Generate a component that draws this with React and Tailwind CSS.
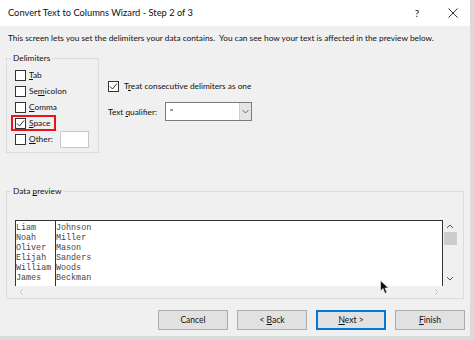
import React from 'react';

const ui = { fontFamily: 'Lato, "Noto Sans", Arial, sans-serif' };
const mono = { fontFamily: '"Liberation Mono", "Courier New", monospace' };

function Box({ checked }) {
    return (
        <span className="w-[11px] h-[11px] border border-[#333] bg-white flex items-center justify-center shrink-0">
            {checked && (
                <svg width="9" height="9" viewBox="0 0 9 9">
                    <path d="M1 4.5 L3.5 7 L8 1.5" fill="none" stroke="#333" strokeWidth="1" />
                </svg>
            )}
        </span>
    );
}

function Check({ label, u, checked, red, children }) {
    const i = label.indexOf(u);
    return (
        <div className="h-[16px] flex items-center">
            <div className={`flex items-center gap-[3px] h-[16px] pr-[4px] pl-[2px] -ml-[2px] ${red ? 'border-2 border-[#e8141b] -ml-[4px] pl-[2px]' : ''}`}>
                <Box checked={checked} />
                <span>
                    {label.slice(0, i)}<span className="underline">{u}</span>{label.slice(i + 1)}
                </span>
            </div>
            {children}
        </div>
    );
}

const rows = [
    ['Liam', 'Johnson'],
    ['Noah', 'Miller'],
    ['Oliver', 'Mason'],
    ['Elijah', 'Sanders'],
    ['William', 'Woods'],
    ['James', 'Beckman'],
];

function Btn({ children, active }) {
    return (
        <button className={`w-[70px] h-[20px] text-[8.5px] text-[#111] bg-[#e1e1e1] border ${active ? 'border-[#0078d7] border-2' : 'border-[#adadad]'}`}>
            {children}
        </button>
    );
}

export default function App() {
    return (
        <div className="w-[474px] h-[340px] bg-[#d6d6d6] relative overflow-hidden text-[#111]" style={ui}>
            <div className="w-[470px] h-[336px] flex flex-col bg-[#f0f0f0]">
                {/* title bar */}
                <div className="h-[26px] bg-white flex items-center pl-[8px] pr-[12px] text-[9.3px]">
                    <span className="flex-1">Convert Text to Columns Wizard - Step 2 of 3</span>
                    <span className="w-[12px] text-center mr-[25px] text-[10px]">?</span>
                    <svg width="10" height="10" viewBox="0 0 10 10">
                        <path d="M0.5 0.5 L9.5 9.5 M9.5 0.5 L0.5 9.5" stroke="#333" strokeWidth="1" />
                    </svg>
                </div>

                <div className="flex-1 flex flex-col px-[6px] text-[8.3px]">
                    <div className="pl-[2px] pt-[5px] h-[24px] leading-[14px] whitespace-nowrap">
                        This screen lets you set the delimiters your data contains.&nbsp; You can see how your text is affected in the preview below.
                    </div>

                    <div className="flex mt-[2px]">
                        <fieldset className="w-[93px] h-[101px] border border-[#dcdcdc] pl-[8px]">
                            <legend className="px-[2px] -ml-[4px] leading-[12px]">Delimiters</legend>
                            <div className="mt-[3px] flex flex-col">
                                <Check label="Tab" u="T" />
                                <Check label="Semicolon" u="m" />
                                <Check label="Comma" u="C" />
                                <Check label="Space" u="S" checked red />
                                <Check label="Other:" u="O">
                                    <span className="ml-[3px] w-[29px] h-[17px] bg-white border border-[#c8c8c8]" />
                                </Check>
                            </div>
                        </fieldset>

                        <div className="flex flex-col pl-[9px] pt-[28px]">
                            <div className="flex items-center gap-[5px]">
                                <Box checked />
                                <span>
                                    T<span className="underline">r</span>eat consecutive delimiters as one
                                </span>
                            </div>
                            <div className="flex items-center mt-[10px]">
                                <span className="w-[57px] whitespace-nowrap">
                                    Text <span className="underline">q</span>ualifier:
                                </span>
                                <div className="w-[87px] h-[19px] bg-white border border-[#7a7a7a] flex items-center">
                                    <span className="flex-1 pl-[4px]">"</span>
                                    <span className="w-[12px] h-full bg-[#e5e5e5] border-l border-[#cfcfcf] flex items-center justify-center">
                                        <svg width="7" height="5" viewBox="0 0 7 5">
                                            <path d="M0.5 1 L3.5 4 L6.5 1" fill="none" stroke="#666" strokeWidth="1" />
                                        </svg>
                                    </span>
                                </div>
                            </div>
                        </div>
                    </div>

                    <fieldset className="mt-[32px] w-[458px] h-[114px] border border-[#dcdcdc] pl-[8px] pr-[6px]">
                        <legend className="px-[2px] -ml-[4px] leading-[12px]">
                            Data <span className="underline">p</span>review
                        </legend>
                        <div className="mt-[23px] flex">
                            <div className="flex-1 flex flex-col">
                                <div className="h-[66px] bg-white border-t border-x border-[#333] flex text-[8.4px] leading-[10px] text-[#444]" style={mono}>
                                    <div className="w-[40px] border-r border-[#333] pt-[2px]">
                                        {rows.map((r) => (
                                            <div key={r[0]}>{r[0]}</div>
                                        ))}
                                    </div>
                                    <div className="pt-[2px]">
                                        {rows.map((r) => (
                                            <div key={r[1]}>{r[1]}</div>
                                        ))}
                                    </div>
                                </div>
                                <div className="h-[12px] flex items-center justify-between px-[4px]">
                                    <svg width="5" height="8" viewBox="0 0 5 8">
                                        <path d="M4 1 L1 4 L4 7" fill="none" stroke="#c8c8c8" strokeWidth="1" />
                                    </svg>
                                    <svg width="5" height="8" viewBox="0 0 5 8">
                                        <path d="M1 1 L4 4 L1 7" fill="none" stroke="#c8c8c8" strokeWidth="1" />
                                    </svg>
                                </div>
                            </div>
                            <div className="w-[14px] h-[66px] flex flex-col items-center">
                                <svg className="mt-[4px]" width="8" height="5" viewBox="0 0 8 5">
                                    <path d="M1 4 L4 1 L7 4" fill="none" stroke="#555" strokeWidth="1" />
                                </svg>
                                <div className="w-[13px] h-[13px] mt-[3px] bg-[#cdcdcd]" />
                                <div className="flex-1" />
                                <svg className="mb-[5px]" width="8" height="5" viewBox="0 0 8 5">
                                    <path d="M1 1 L4 4 L7 1" fill="none" stroke="#555" strokeWidth="1" />
                                </svg>
                            </div>
                        </div>
                    </fieldset>

                    <div className="flex justify-end gap-[9px] mt-[11px] mr-[-1px]">
                        <Btn>Cancel</Btn>
                        <Btn>&lt; <span className="underline">B</span>ack</Btn>
                        <Btn active><span className="underline">N</span>ext &gt;</Btn>
                        <Btn><span className="underline">F</span>inish</Btn>
                    </div>
                </div>
            </div>

            {/* excel background strips */}
            <div className="absolute right-0 top-0 w-[4px] h-full bg-[#dadada]" />
            <div className="absolute left-0 bottom-0 w-full h-[4px] bg-[#dadada]" />

            {/* mouse cursor */}
            <svg className="absolute left-[380px] top-[280px]" width="10" height="15" viewBox="0 0 10 15">
                <path d="M0.5 0.5 L0.5 11 L3 8.5 L5 13.5 L7 12.5 L5 8 L8.5 8 Z" fill="#111" stroke="#fff" strokeWidth="0.6" />
            </svg>
        </div>
    );
}
